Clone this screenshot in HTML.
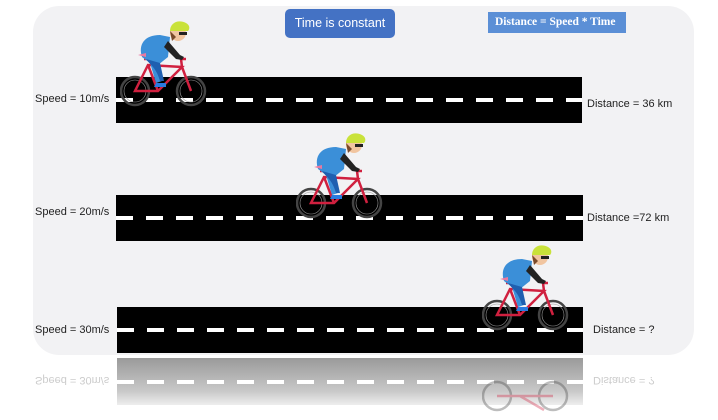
<!DOCTYPE html>
<html><head><meta charset="utf-8"><style>
*{margin:0;padding:0;box-sizing:border-box}
body{width:718px;height:413px;background:#fff;position:relative;overflow:hidden;font-family:"Liberation Sans",sans-serif}
.panel{position:absolute;left:33px;top:6px;width:661px;height:349px;background:#f2f2f4;border-radius:26px}
.road{position:absolute;background:#000;height:46px}
.road::after{content:"";position:absolute;left:0;right:0;top:21px;height:4px;background:repeating-linear-gradient(90deg,#fff 0 17px,transparent 17px 30px)}
.lbl{position:absolute;font-size:11px;color:#222;white-space:nowrap}
.box1{position:absolute;left:285px;top:9px;width:110px;height:29px;background:#4472c4;border-radius:5px;color:#fff;font-size:12.5px;text-align:center;line-height:29px}
.box2{position:absolute;left:488px;top:12px;width:138px;height:21px;background:#5b8fd6;color:#fff;font-family:"Liberation Serif",serif;font-weight:bold;font-size:11.5px;line-height:21px;padding-left:7px}
.refl{position:absolute;left:117px;top:358px;width:466px;height:47px;background:linear-gradient(#9a9a9a,#c8c8c8 70%,#eee);}
.refl::after{content:"";position:absolute;left:0;right:0;top:22px;height:4px;background:repeating-linear-gradient(90deg,#fff 0 17px,transparent 17px 30px)}
.rl{position:absolute;font-size:11px;color:#ccc;transform:scaleY(-1)}
svg.bike{position:absolute}
</style></head><body>
<div class="panel"></div>
<div class="box1">Time is constant</div>
<div class="box2">Distance = Speed * Time</div>
<div class="road" style="left:116px;top:77px;width:466px"></div>
<div class="road" style="left:116px;top:195px;width:467px"></div>
<div class="road" style="left:117px;top:307px;width:466px"></div>
<div class="lbl" style="left:35px;top:93px">Speed = 10m/s</div>
<div class="lbl" style="left:35px;top:206px">Speed = 20m/s</div>
<div class="lbl" style="left:35px;top:324px">Speed = 30m/s</div>
<div class="lbl" style="left:587px;top:98px">Distance = 36 km</div>
<div class="lbl" style="left:587px;top:212px">Distance =72 km</div>
<div class="lbl" style="left:593px;top:324px">Distance = ?</div>
<div class="refl"></div>
<div class="rl" style="left:35px;top:374px">Speed = 30m/s</div>
<div class="rl" style="left:593px;top:374px">Distance = ?</div>
<svg width="0" height="0" style="position:absolute"><defs>
<g id="b">
<circle cx="15" cy="76" r="14" fill="none" stroke="#444" stroke-width="2.5"/>
<circle cx="15" cy="76" r="11" fill="none" stroke="#999" stroke-width="0.6"/>
<circle cx="71" cy="76" r="14" fill="none" stroke="#444" stroke-width="2.5"/>
<circle cx="71" cy="76" r="11" fill="none" stroke="#999" stroke-width="0.6"/>
<path d="M15 76 L38 76 L62 52 L28 50 Z M38 76 L28 50 M62 52 L71 76 M62 52 L61 44 L66 44 M24 44 L32 44" fill="none" stroke="#d0203f" stroke-width="2.5"/>
<path d="M22 42 C18 30 24 20 40 20 L50 22 L48 42 L38 50 L42 66 L36 68 L30 48 Z" fill="#3b8fd8"/>
<path d="M26 44 C30 50 36 52 40 66 L44 66 L40 48 Z" fill="#1f5fb0"/>
<path d="M48 26 L60 40 L64 42 L62 45 L56 44 L44 32 Z" fill="#222"/>
<path d="M36 68 L46 68 L46 72 L34 72 Z" fill="#2a7be0"/>
<circle cx="58" cy="18" r="8" fill="#f1c5a0"/>
<path d="M50 16 C50 8 58 4 66 8 C70 10 70 14 68 16 Z" fill="#c9e23a"/>
<path d="M50 16 L52 26 L56 22 Z" fill="#7a4a2a"/>
<rect x="59" y="17" width="8" height="3" fill="#222"/>
<path d="M18 40 L26 38 L26 42 Z" fill="#e879a0"/>
</g></defs></svg>
<svg class="bike" style="left:120px;top:15px" width="90" height="92" viewBox="0 0 90 92"><use href="#b"/></svg>
<svg class="bike" style="left:296px;top:127px" width="90" height="92" viewBox="0 0 90 92"><use href="#b"/></svg>
<svg class="bike" style="left:482px;top:239px" width="90" height="92" viewBox="0 0 90 92"><use href="#b"/></svg>
<svg class="bike" style="left:482px;top:380px;opacity:.35" width="90" height="40" viewBox="0 0 90 40"><circle cx="15" cy="16" r="14" fill="none" stroke="#444" stroke-width="2.5"/><circle cx="71" cy="16" r="14" fill="none" stroke="#444" stroke-width="2.5"/><path d="M15 16 L38 16 L62 30 M38 16 L71 16" stroke="#d0203f" stroke-width="2.5" fill="none"/></svg>
</body></html>
